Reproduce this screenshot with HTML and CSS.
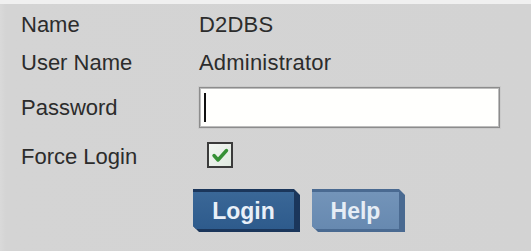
FILE: index.html
```html
<!DOCTYPE html>
<html>
<head>
<meta charset="utf-8">
<link rel="stylesheet" href="styles.css">
</head>
<body>
<div class="panel">
  <div class="form">
    <div class="row">
      <div class="label">Name</div>
      <div class="value">D2DBS</div>
    </div>
    <div class="row">
      <div class="label">User Name</div>
      <div class="value">Administrator</div>
    </div>
    <div class="row pw">
      <div class="label">Password</div>
      <div class="field">
        <input class="input" type="password" aria-label="Password">
        <span class="caret"></span>
      </div>
    </div>
    <div class="row force">
      <div class="label">Force Login</div>
      <span class="check" role="checkbox" aria-checked="true">
        <svg width="26" height="26" viewBox="0 0 26 26">
          <defs>
            <linearGradient id="cb" x1="0" y1="0" x2="1" y2="1">
              <stop offset="0" stop-color="#f4f7f4"/>
              <stop offset="1" stop-color="#dfe9df"/>
            </linearGradient>
          </defs>
          <rect x="1" y="1" width="24" height="24" fill="url(#cb)" stroke="#3b3b3b" stroke-width="2"/>
          <path d="M7 13.5 L11 18 L19.5 8.5" fill="none" stroke="#359135" stroke-width="3.4" stroke-linecap="round" stroke-linejoin="round"/>
        </svg>
      </span>
    </div>
    <div class="actions">
      <button class="btn login"><span class="face">Login</span></button>
      <button class="btn help"><span class="face">Help</span></button>
    </div>
  </div>
</div>
</body>
</html>
```
FILE: styles.css
```css
html, body {
  margin: 0;
  padding: 0;
}
body {
  background: #f0f0f0;
  width: 531px;
  height: 251px;
  overflow: hidden;
  font-family: "Liberation Sans", Arial, sans-serif;
}
.panel {
  margin-top: 4px;
  height: 247px;
  background: linear-gradient(90deg, #d9d9d9 0, #d4d4d4 6px, #d3d3d3 100%);
}
.form {
  padding: 2px 0 0 21px;
  display: flex;
  flex-direction: column;
}
.row {
  display: flex;
  align-items: center;
  height: 38px;
  font-size: 22px;
  color: #2c2c2c;
}
.row.pw {
  height: 51px;
}
.row.force {
  height: 48px;
}
.label {
  width: 178px;
  flex: none;
}
.value {
  letter-spacing: 0.2px;
}
.field {
  position: relative;
  width: 301px;
  height: 41px;
}
.input {
  box-sizing: border-box;
  width: 100%;
  height: 100%;
  margin: 0;
  border: 1px solid #8c8c8c;
  box-shadow: inset 0 0 0 1px #bdbdbd, 0 0 0 1px #cacaca;
  background: #fffffd;
  outline: none;
  padding: 0 6px;
}
.caret {
  position: absolute;
  left: 5px;
  top: 6px;
  width: 2px;
  height: 29px;
  background: #111;
}
.check {
  display: block;
  width: 26px;
  height: 26px;
  margin-left: 8px;
  margin-top: -4px;
}
.check svg {
  display: block;
}
.actions {
  display: flex;
  gap: 12px;
  padding-left: 172px;
  margin-top: 8px;
}
.btn {
  position: relative;
  height: 43px;
  padding: 0;
  border: 0;
  cursor: pointer;
  clip-path: polygon(0 0, calc(100% - 6px) 0, 100% 6px, 100% 100%, 6px 100%, 0 calc(100% - 6px));
  display: block;
  font-family: "Liberation Sans", Arial, sans-serif;
  font-weight: bold;
  font-size: 23px;
}
.btn .face {
  display: flex;
  align-items: center;
  justify-content: center;
  width: calc(100% - 6px);
  height: calc(100% - 6px);
  color: #e9f0f8;
  padding-top: 1px;
  box-sizing: border-box;
}
.login {
  width: 107px;
  background: #1b365b;
}
.login .face {
  background: linear-gradient(#3a6797, #2e5b8c);
}
.help {
  width: 93px;
  background: #4a6a91;
}
.help .face {
  background: linear-gradient(#7394b9, #6789b0);
  color: #e6edf5;
}
```
